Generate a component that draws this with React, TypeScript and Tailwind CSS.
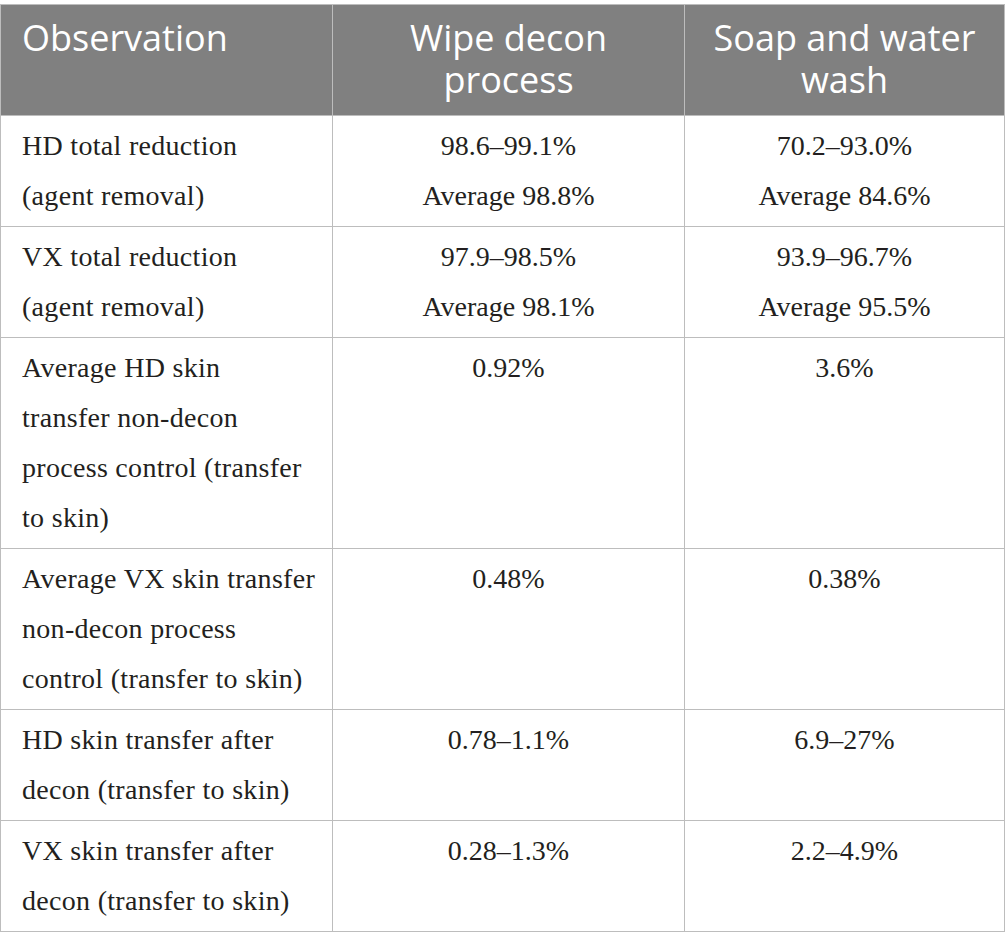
import React from "react";

const rows: { obs: React.ReactNode; wipe: React.ReactNode; soap: React.ReactNode }[] = [
  {
    obs: (<>HD total reduction<br />(agent removal)</>),
    wipe: (<>98.6–99.1%<br />Average 98.8%</>),
    soap: (<>70.2–93.0%<br />Average 84.6%</>),
  },
  {
    obs: (<>VX total reduction<br />(agent removal)</>),
    wipe: (<>97.9–98.5%<br />Average 98.1%</>),
    soap: (<>93.9–96.7%<br />Average 95.5%</>),
  },
  {
    obs: (<>Average HD skin<br />transfer non-decon<br />process control (transfer<br />to skin)</>),
    wipe: <>0.92%</>,
    soap: <>3.6%</>,
  },
  {
    obs: (<>Average VX skin transfer<br />non-decon process<br />control (transfer to skin)</>),
    wipe: <>0.48%</>,
    soap: <>0.38%</>,
  },
  {
    obs: (<>HD skin transfer after<br />decon (transfer to skin)</>),
    wipe: <>0.78–1.1%</>,
    soap: <>6.9–27%</>,
  },
  {
    obs: (<>VX skin transfer after<br />decon (transfer to skin)</>),
    wipe: <>0.28–1.3%</>,
    soap: <>2.2–4.9%</>,
  },
];

export default function App() {
  return (
    <div className="bg-white w-[1005px] h-[951px] pt-[4px]">
      <table className="table-fixed border-collapse w-[1004px] border border-[#bdbdbd]">
        <colgroup>
          <col className="w-[332px]" />
          <col className="w-[352px]" />
          <col className="w-[320px]" />
        </colgroup>
        <thead>
          <tr className="bg-[#808080] text-white font-['Open_Sans',sans-serif] text-[36px] leading-[42px] font-normal">
            <th className="h-[111px] align-top text-left font-normal pl-[21px] pt-[12px] border-r border-[#bdbdbd]">Observation</th>
            <th className="h-[111px] align-top text-center font-normal pt-[12px] border-r border-[#bdbdbd]">Wipe decon<br />process</th>
            <th className="h-[111px] align-top text-center font-normal pt-[12px]">Soap and water<br />wash</th>
          </tr>
        </thead>
        <tbody className="font-['Liberation_Serif',serif] text-[28px] leading-[50px] text-[#231f20]">
          {rows.map((r, i) => (
            <tr key={i} className="border-t border-[#bdbdbd]">
              <td className="align-top pl-[21px] pt-[5px] pb-[5px] border-r border-[#bdbdbd] whitespace-nowrap tracking-[0.3px]">{r.obs}</td>
              <td className="align-top text-center pt-[5px] pb-[5px] border-r border-[#bdbdbd]">{r.wipe}</td>
              <td className="align-top text-center pt-[5px] pb-[5px]">{r.soap}</td>
            </tr>
          ))}
        </tbody>
      </table>
    </div>
  );
}
